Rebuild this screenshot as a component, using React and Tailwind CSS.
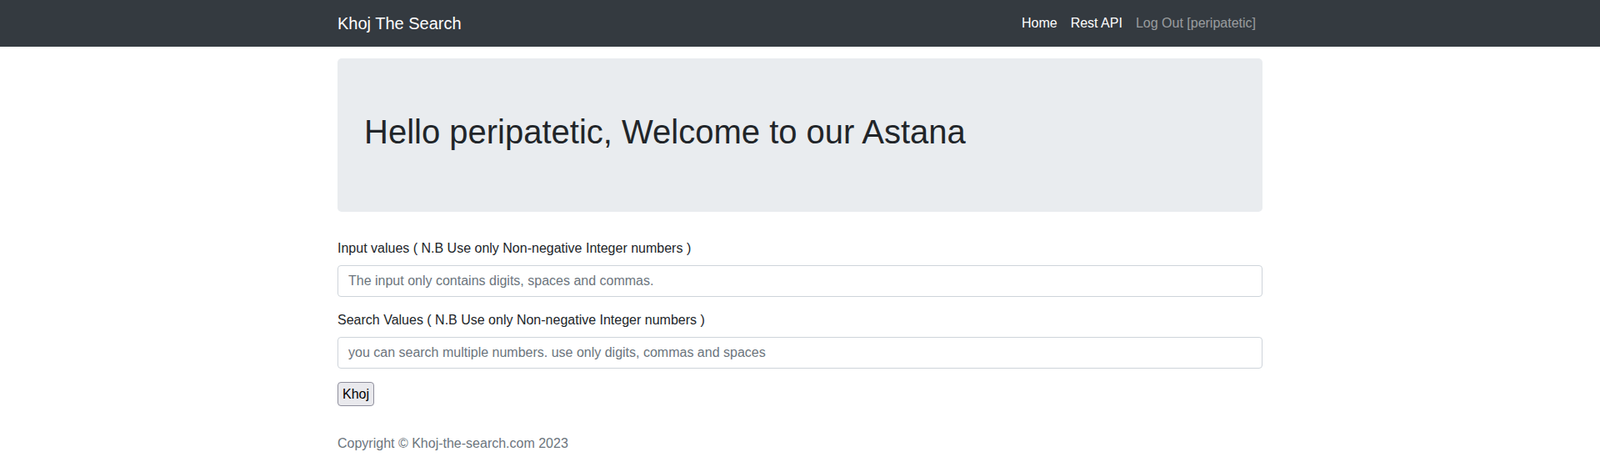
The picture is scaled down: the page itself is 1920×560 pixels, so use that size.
import React from 'react'

const font = { fontFamily: '"Liberation Sans", Arial, sans-serif' }

const Navbar = () => {
  return (
    <nav className="bg-[#343a40] h-14">
      <div className="w-[1110px] mx-auto h-full flex items-center justify-between">
        <a href="#" className="text-white text-[20px] leading-[30px] py-[5px]">
          Khoj The Search
        </a>
        <ul className="flex items-center">
          <li><a href="#" className="block px-2 py-2 leading-6 text-white">Home</a></li>
          <li><a href="#" className="block px-2 py-2 leading-6 text-white">Rest API</a></li>
          <li><a href="#" className="block px-2 py-2 leading-6 text-white/50">Log Out [peripatetic]</a></li>
        </ul>
      </div>
    </nav>
  )
}

const Field = ({ id, label, placeholder }) => (
  <div className="mb-4">
    <label htmlFor={id} className="block mb-2 leading-6">{label}</label>
    <input
      id={id}
      type="text"
      placeholder={placeholder}
      className="block w-full h-[38px] px-3 py-1.5 leading-6 border border-[#ced4da] rounded-[4px] bg-white text-[#495057] placeholder:text-[#6c757d] outline-none"
    />
  </div>
)

export default function App() {
  return (
    <div className="min-h-[560px] bg-white text-[#212529] text-base" style={font}>
      <Navbar />
      <div className="w-[1110px] mx-auto pt-[14px]">
        {/* Jumbotron */}
        <div className="bg-[#e9ecef] rounded-[5px] px-8 py-16 mb-8">
          <h1 className="text-[40px] leading-[48px] mb-2">Hello peripatetic, Welcome to our Astana</h1>
        </div>

        <form onSubmit={(e) => e.preventDefault()}>
          <Field
            id="input-values"
            label="Input values ( N.B Use only Non-negative Integer numbers )"
            placeholder="The input only contains digits, spaces and commas."
          />
          <Field
            id="search-values"
            label="Search Values ( N.B Use only Non-negative Integer numbers )"
            placeholder="you can search multiple numbers. use only digits, commas and spaces"
          />
          <button
            type="submit"
            className="block h-[29px] bg-[#e9e9ed] text-black border border-[#8f8f9d] rounded-[4px] px-[5px] leading-6"
          >
            Khoj
          </button>
        </form>

        <footer className="mt-[33px] leading-6 text-[#6c757d]">
          Copyright © Khoj-the-search.com 2023
        </footer>
      </div>
    </div>
  )
}
